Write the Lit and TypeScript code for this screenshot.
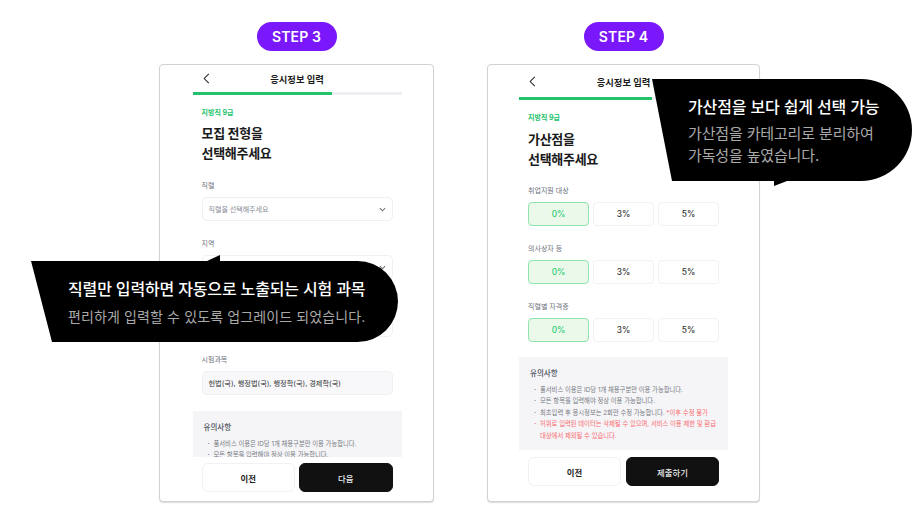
import { LitElement, html, css, svg } from "lit";
import { customElement } from "lit/decorators.js";

const chevronLeft = html`<svg class="back" viewBox="0 0 7 12" fill="none" stroke="#222" stroke-width="1.1"><path d="M6 1 1 6l5 5" /></svg>`;
const chevronDown = html`<svg class="down" viewBox="0 0 8 5" fill="none" stroke="#6f737d" stroke-width="1.2"><path d="M1 1l3 3 3-3" /></svg>`;

@customElement("app-root")
export class AppRoot extends LitElement {
  static styles = css`
    :host {
      display: block;
      width: 920px;
      height: 524px;
      position: relative;
      overflow: hidden;
      background: #fff;
      font-family: Inter, "Noto Sans CJK KR", sans-serif;
      color: #1a1a1a;
    }
    .page { display: flex; padding: 22px 0 0 159px; gap: 53px; }
    .col { display: flex; flex-direction: column; align-items: center; gap: 13px; }
    .pill {
      width: 80px; height: 29px; border-radius: 15px; background: #7a18fb; color: #fff;
      display: flex; align-items: center; justify-content: center;
      font-size: 14px; font-weight: 600; letter-spacing: 0.1px;
    }
    .card {
      height: 438px; box-sizing: border-box; border: 1px solid #d2d2d2; border-radius: 4px;
      box-shadow: 0 1px 1px #dcdcdc; display: flex; justify-content: center; background: #fff;
    }
    .card.a { width: 275px; padding-left: 1px; }
    .card.b { width: 273px; }
    .inner { width: 209px; display: flex; flex-direction: column; }
    .head {
      height: 27px; position: relative; display: flex; align-items: center; justify-content: center;
      font-size: 9.3px; font-weight: 700;
    }
    .b .head { height: 32px; padding-top: 1px; box-sizing: border-box; }
    .back { position: absolute; left: 10px; width: 7px; height: 11px; }
    .progress { height: 3px; background: #eeeef3; flex: none; }
    .progress i { display: block; width: 133px; height: 100%; background: #22c36b; }
    .body { flex: 1; overflow: hidden; padding-top: 12px; min-height: 0; }
    .pad { padding: 0 9px; }
    .tag { font-size: 7px; line-height: 12px; font-weight: 700; color: #22c36b; }
    .title { margin: 4px 0 18px; font-size: 13px; line-height: 20px; font-weight: 700; color: #1a1a1a; letter-spacing: -0.3px; }
    .b .title { margin: 5px 0 17px; }
    .label { font-size: 7px; line-height: 10px; color: #6e727c; margin-bottom: 6px; }
    .select {
      height: 24px; box-sizing: border-box; border: 1px solid #f0f0f3; border-radius: 5px; margin-bottom: 18px;
      display: flex; align-items: center; padding: 0 6px;
      font-size: 7px; color: #868a94; background: #fff;
    }
    .down { width: 7px; height: 5px; margin-left: auto; }
    .select.filled { background: #f8f8fb; color: #333; font-size: 7.2px; margin-bottom: 16px; }
    .rates { display: grid; grid-template-columns: repeat(3, 61px); gap: 4px; margin-bottom: 18px; }
    .rates.last { margin-bottom: 15px; }
    .rate {
      height: 24px; box-sizing: border-box; border: 1px solid #f1f1f3; border-radius: 4px;
      display: flex; align-items: center; justify-content: center; font-size: 8.4px; font-weight: 500; color: #333;
    }
    .rate.on { background: #ebf9eb; border-color: #8fe5ae; color: #2ecb72; }
    .notice { background: #f5f5f8; padding: 11px 11px 0; box-sizing: border-box; height: 93px; }
    .notice h4 { margin: 0 0 5px; font-size: 7.5px; line-height: 12px; font-weight: 500; color: #50545e; }
    .notice ul { margin: 0; padding: 0; list-style: none; }
    .notice li {
      position: relative; padding-left: 10px; font-size: 6.3px; line-height: 11.4px; color: #777a82;
    }
    .notice li::before { content: "·"; position: absolute; left: 4px; font-weight: 700; }
    .notice .red, .notice li.red { color: #f9696c; }
    .foot { display: flex; gap: 4px; padding: 6px 9px 9px; flex: none; }
    .b .foot { padding: 7px 9px 15px; gap: 5px; }
    .btn {
      flex: 1; height: 29px; box-sizing: border-box; border: 1px solid #f1f1f3; border-radius: 6px;
      display: flex; align-items: center; justify-content: center; font-size: 8.4px; font-weight: 700; color: #222;
    }
    .btn.dark { background: #111; border-color: #111; color: #e8e8e8; font-weight: 500; }
    .tip { position: absolute; color: #fff; box-sizing: border-box; }
    .tip svg { position: absolute; inset: 0; width: 100%; height: 100%; }
    .tip p { position: relative; margin: 0; line-height: 22px; white-space: nowrap; }
    .tip p.main { font-size: 16px; font-weight: 500; letter-spacing: -0.15px; }
    .tip p.sub { color: #a9a9a9; font-weight: 400; }
    .tip1 { left: 31px; top: 255px; width: 367px; height: 87px; padding: 23px 0 0 37px; }
    .tip1 .main { margin-bottom: 6px; }
    .tip1 .sub { font-size: 14px; letter-spacing: 0.12px; }
    .tip2 { left: 652px; top: 79px; width: 260px; height: 107px; padding: 17px 0 0 36px; }
    .tip2 .main { margin-bottom: 5px; letter-spacing: -0.1px; }
    .tip2 .sub { font-size: 15px; letter-spacing: -0.15px; }
  `;

  private notes(first: boolean) {
    return html`<div class="notice">
      <h4>유의사항</h4>
      <ul>
        <li>풀서비스 이용은 ID당 1개 채용구분만 이용 가능합니다.</li>
        <li>모든 항목을 입력해야 정상 이용 가능합니다.</li>
        ${first ? "" : html`
          <li>최초입력 후 응시정보는 2회만 수정 가능합니다. <span class="red">*이후 수정 불가</span></li>
          <li class="red">허위로 입력된 데이터는 삭제될 수 있으며, 서비스 이용 제한 및 환급 대상에서 제외될 수 있습니다.</li>`}
      </ul>
    </div>`;
  }

  private rates(label: string, last = false) {
    return html`<div class="label">${label}</div>
      <div class="rates ${last ? "last" : ""}">
        <div class="rate on">0%</div><div class="rate">3%</div><div class="rate">5%</div>
      </div>`;
  }

  render() {
    return html`
      <div class="page">
        <div class="col">
          <div class="pill">STEP 3</div>
          <div class="card a"><div class="inner">
            <div class="head">${chevronLeft}응시정보 입력</div>
            <div class="progress"><i style="width:139px"></i></div>
            <div class="body">
              <div class="pad">
                <div class="tag">지방직 9급</div>
                <div class="title">모집 전형을<br />선택해주세요</div>
                <div class="label">직렬</div>
                <div class="select">직렬을 선택해주세요${chevronDown}</div>
                <div class="label">지역</div>
                <div class="select">${chevronDown}</div>
                <div class="label">&nbsp;</div>
                <div class="select">${chevronDown}</div>
                <div class="label">시험과목</div>
                <div class="select filled">헌법(국), 행정법(국), 행정학(국), 경제학(국)</div>
              </div>
              ${this.notes(true)}
            </div>
            <div class="foot"><div class="btn">이전</div><div class="btn dark">다음</div></div>
          </div></div>
        </div>
        <div class="col">
          <div class="pill">STEP 4</div>
          <div class="card b"><div class="inner">
            <div class="head">${chevronLeft}응시정보 입력</div>
            <div class="progress"><i></i></div>
            <div class="body">
              <div class="pad">
                <div class="tag">지방직 9급</div>
                <div class="title">가산점을<br />선택해주세요</div>
                ${this.rates("취업지원 대상")}
                ${this.rates("의사상자 등")}
                ${this.rates("직렬별 자격증", true)}
              </div>
              ${this.notes(false)}
            </div>
            <div class="foot"><div class="btn">이전</div><div class="btn dark">제출하기</div></div>
          </div></div>
        </div>
      </div>
      <div class="tip tip1">
        <svg viewBox="0 0 367 87">${svg`<path fill="#000" d="M0 6H176L189 0V6H326.5A40.5 40.5 0 0 1 326.5 87H21Z" />`}</svg>
        <p class="main">직렬만 입력하면 자동으로 노출되는 시험 과목</p>
        <p class="sub">편리하게 입력할 수 있도록 업그레이드 되었습니다.</p>
      </div>
      <div class="tip tip2">
        <svg viewBox="0 0 260 107">${svg`<path fill="#000" d="M0 0H209A51 51 0 0 1 209 102H135L122 107V102H20Z" />`}</svg>
        <p class="main">가산점을 보다 쉽게 선택 가능</p>
        <p class="sub">가산점을 카테고리로 분리하여</p>
        <p class="sub">가독성을 높였습니다.</p>
      </div>
    `;
  }
}
